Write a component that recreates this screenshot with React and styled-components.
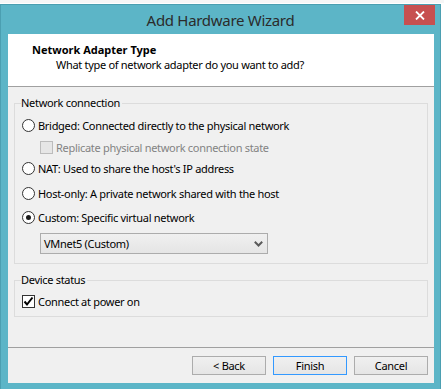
import React from "react";
import styled, { createGlobalStyle } from "styled-components";

const FONT = `"Noto Sans", "Open Sans", "DejaVu Sans", sans-serif`;

const Global = createGlobalStyle`
  html, body { margin: 0; padding: 0; background: #ffffff; }
  body { font-family: ${FONT}; font-size: 11px; letter-spacing: -0.3px; color: #000; overflow: hidden; }
`;

const Desktop = styled.div`
  width: 444px;
  height: 389px;
  padding-top: 4px;
  box-sizing: border-box;
  background: linear-gradient(#f6f6f6, #f6f6f6) top / 100% 3px no-repeat, #ffffff;
`;

const Window = styled.div`
  width: 441px;
  box-sizing: border-box;
  background: #5cb5c7;
  border: 1px solid #4b9fb1;
  padding: 0 6px 6px 7px;
`;

const TitleBar = styled.div`
  position: relative;
  height: 29px;
  display: flex;
  align-items: center;
  justify-content: center;
  margin: 0 -6px 0 -7px;
`;

const Title = styled.div`
  font-size: 15px;
  color: #2b2b2b;
  letter-spacing: -0.3px;
`;

const CloseButton = styled.div`
  position: absolute;
  top: 0;
  right: 5px;
  width: 31px;
  height: 20px;
  background: #c75050;
  display: flex;
  align-items: center;
  justify-content: center;
`;

const Client = styled.div`
  background: #f0f0f0;
  height: 349px;
  display: flex;
  flex-direction: column;
`;

const Header = styled.div`
  height: 53px;
  flex: none;
  background: #ffffff;
  border-bottom: 1px solid #a0a0a0;
  box-sizing: border-box;
  padding: 8px 0 0 24px;
`;

const HeaderTitle = styled.div`
  font-weight: bold;
  line-height: 15px;
  letter-spacing: 0;
`;

const HeaderSub = styled.div`
  line-height: 15px;
  padding-left: 24px;
`;

const Body = styled.div`
  flex: 1;
  min-height: 0;
  padding: 8px 6px 0 6px;
  display: flex;
  flex-direction: column;
`;

const Group = styled.fieldset`
  margin: ${(p) => p.$mt || 0}px 0 0 0;
  border: 1px solid #dcdcdc;
  padding: 0 6px ${(p) => p.$pb || 0}px 7px;
  min-width: 0;
`;

const Legend = styled.legend`
  padding: 0 2px 0 0;
  line-height: 16px;
  margin-left: -1px;
`;

const Row = styled.div`
  display: flex;
  align-items: center;
  height: 16px;
  margin-top: ${(p) => p.$mt || 0}px;
  margin-left: ${(p) => p.$indent || 0}px;
  color: ${(p) => (p.$disabled ? "#838383" : "#000")};
`;

const Radio = styled.span`
  width: 13px;
  height: 13px;
  box-sizing: border-box;
  border-radius: 50%;
  border: 1px solid #333;
  background: #fff;
  margin-right: 3px;
  display: flex;
  align-items: center;
  justify-content: center;
  flex: none;
  &::after {
    content: "";
    width: 5px;
    height: 5px;
    border-radius: 50%;
    background: ${(p) => (p.$checked ? "#1a1a1a" : "transparent")};
  }
`;

const Check = styled.span`
  width: 13px;
  height: 13px;
  box-sizing: border-box;
  border: 1px solid ${(p) => (p.$disabled ? "#bcbcbc" : "#333")};
  background: ${(p) => (p.$disabled ? "#e6e6e6" : "#fff")};
  margin-right: 3px;
  display: flex;
  align-items: center;
  justify-content: center;
  flex: none;
`;

const Select = styled.div`
  margin: ${(p) => p.$mt || 0}px 0 0 18px;
  width: 228px;
  height: 21px;
  box-sizing: border-box;
  border: 1px solid #acacac;
  background: linear-gradient(#f0f0f0, #e5e5e5);
  display: flex;
  align-items: center;
  justify-content: space-between;
  padding: 0 4px 0 3px;
`;

const Footer = styled.div`
  height: 36px;
  flex: none;
  box-sizing: border-box;
  border-top: 1px solid #a0a0a0;
  display: flex;
  justify-content: flex-end;
  align-items: flex-start;
  gap: 7px;
  padding: 8px 6px 0 0;
`;

const Button = styled.div`
  width: 74px;
  height: 19px;
  box-sizing: border-box;
  border: 1px solid ${(p) => (p.$default ? "#3399ff" : "#acacac")};
  background: linear-gradient(#f0f0f0, #e5e5e5);
  display: flex;
  align-items: center;
  justify-content: center;
  line-height: 1;
`;

const CheckMark = () => (
  <svg width="11" height="11" viewBox="0 0 11 11">
    <path d="M1.5 5.5 L4 8.5 L9.5 1.5" fill="none" stroke="#000" strokeWidth="2" />
  </svg>
);

const Chevron = () => (
  <svg width="9" height="6" viewBox="0 0 9 6">
    <path d="M0.8 0.8 L4.5 4.5 L8.2 0.8" fill="none" stroke="#5a5a5a" strokeWidth="2" />
  </svg>
);

const CloseX = () => (
  <svg width="10" height="9" viewBox="0 0 10 9">
    <path d="M1 0.5 L9 8.5 M9 0.5 L1 8.5" stroke="#fff" strokeWidth="1.8" />
  </svg>
);

export default function App() {
  return (
    <Desktop>
      <Global />
      <Window>
        <TitleBar>
          <Title>Add Hardware Wizard</Title>
          <CloseButton>
            <CloseX />
          </CloseButton>
        </TitleBar>
        <Client>
          <Header>
            <HeaderTitle>Network Adapter Type</HeaderTitle>
            <HeaderSub>What type of network adapter do you want to add?</HeaderSub>
          </Header>
          <Body>
            <Group $pb={9}>
              <Legend>Network connection</Legend>
              <Row $mt={6}>
                <Radio />
                Bridged: Connected directly to the physical network
              </Row>
              <Row $mt={6} $indent={18} $disabled>
                <Check $disabled />
                Replicate physical network connection state
              </Row>
              <Row $mt={5}>
                <Radio />
                NAT: Used to share the host's IP address
              </Row>
              <Row $mt={9}>
                <Radio />
                Host-only: A private network shared with the host
              </Row>
              <Row $mt={8}>
                <Radio $checked />
                Custom: Specific virtual network
              </Row>
              <Select $mt={8}>
                <span>VMnet5 (Custom)</span>
                <Chevron />
              </Select>
            </Group>
            <Group $mt={8} $pb={7}>
              <Legend>Device status</Legend>
              <Row $mt={5}>
                <Check>
                  <CheckMark />
                </Check>
                Connect at power on
              </Row>
            </Group>
          </Body>
          <Footer>
            <Button>&lt; Back</Button>
            <Button $default>Finish</Button>
            <Button>Cancel</Button>
          </Footer>
        </Client>
      </Window>
    </Desktop>
  );
}
